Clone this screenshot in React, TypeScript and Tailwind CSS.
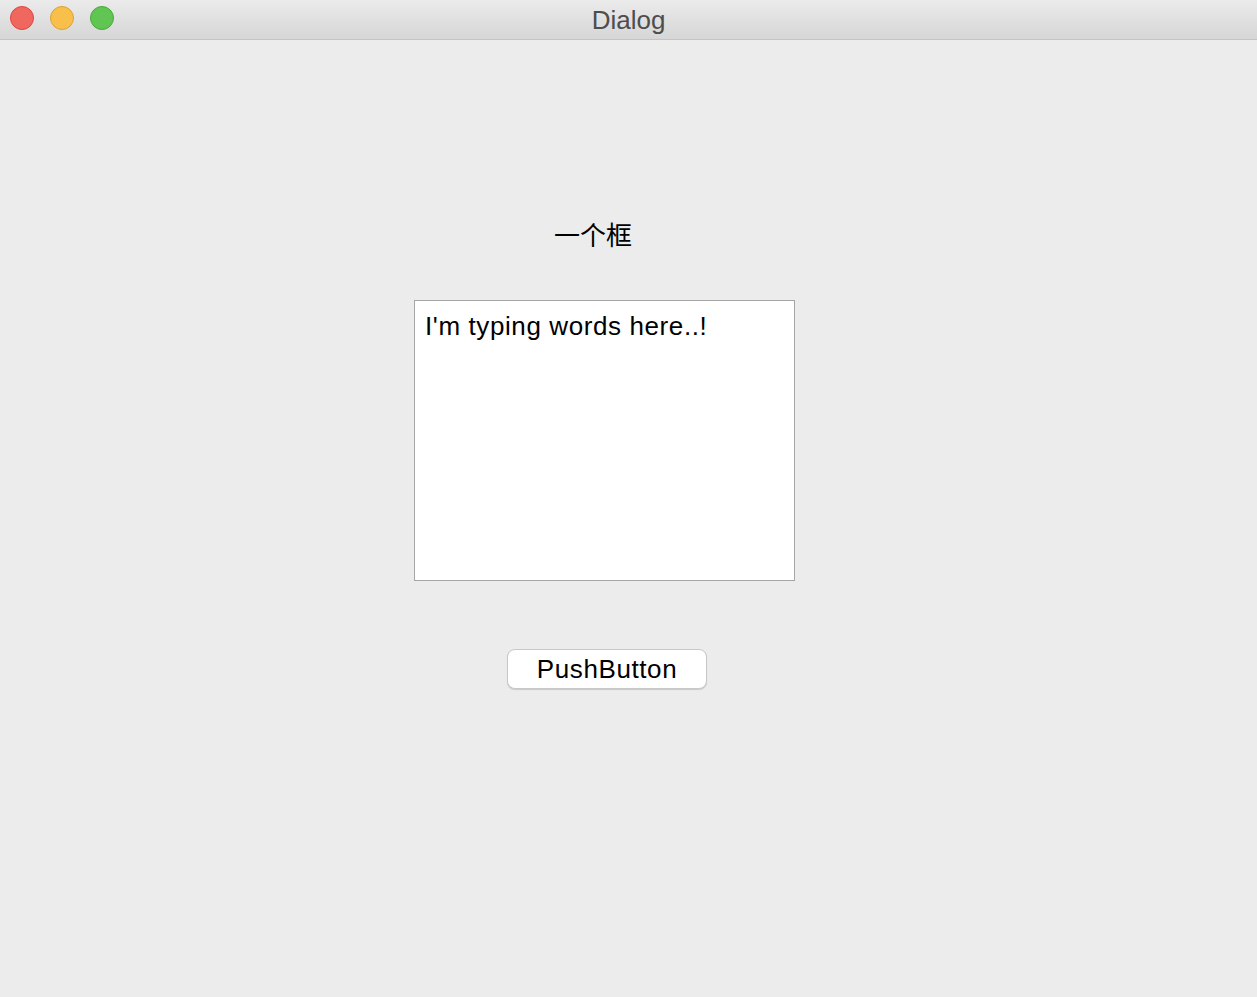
export default function App() {
  return (
    <div
      className="flex h-[997px] w-[1257px] flex-col bg-[#ececec] text-black"
      style={{ fontFamily: '"Liberation Sans", "Noto Sans CJK SC", sans-serif' }}
    >
      {/* Title bar */}
      <div className="relative flex h-[40px] shrink-0 items-center justify-center border-b border-[#c4c4c4] bg-gradient-to-b from-[#ebebeb] to-[#d6d6d6]">
        <div className="absolute left-[10px] top-[6px] flex gap-[16px]">
          <span className="h-[24px] w-[24px] rounded-full border border-[#e0443e] bg-[#f0675f]" />
          <span className="h-[24px] w-[24px] rounded-full border border-[#dea236] bg-[#f8bf4b]" />
          <span className="h-[24px] w-[24px] rounded-full border border-[#4aa83b] bg-[#61c554]" />
        </div>
        <span className="text-[26px] leading-none text-[#4d4d4d]">Dialog</span>
      </div>

      {/* Body */}
      <div className="flex flex-col items-start pl-[414px]">
        <div className="mt-[180px] ml-[140px] text-[26px] leading-[32px]">一个框</div>
        <div className="mt-[48px] h-[281px] w-[381px] border border-[#a6a6a6] bg-white px-[10px] pt-[9px] text-[26px] leading-[32px] tracking-[0.6px]">
          I'm typing words here..!
        </div>
        <button className="mt-[68px] ml-[93px] h-[40px] w-[200px] rounded-[8px] border border-[#c8c8c8] bg-white text-[26px] leading-none tracking-[0.6px] shadow-[0_1px_1px_rgba(0,0,0,0.15)]">
          PushButton
        </button>
      </div>
    </div>
  );
}
